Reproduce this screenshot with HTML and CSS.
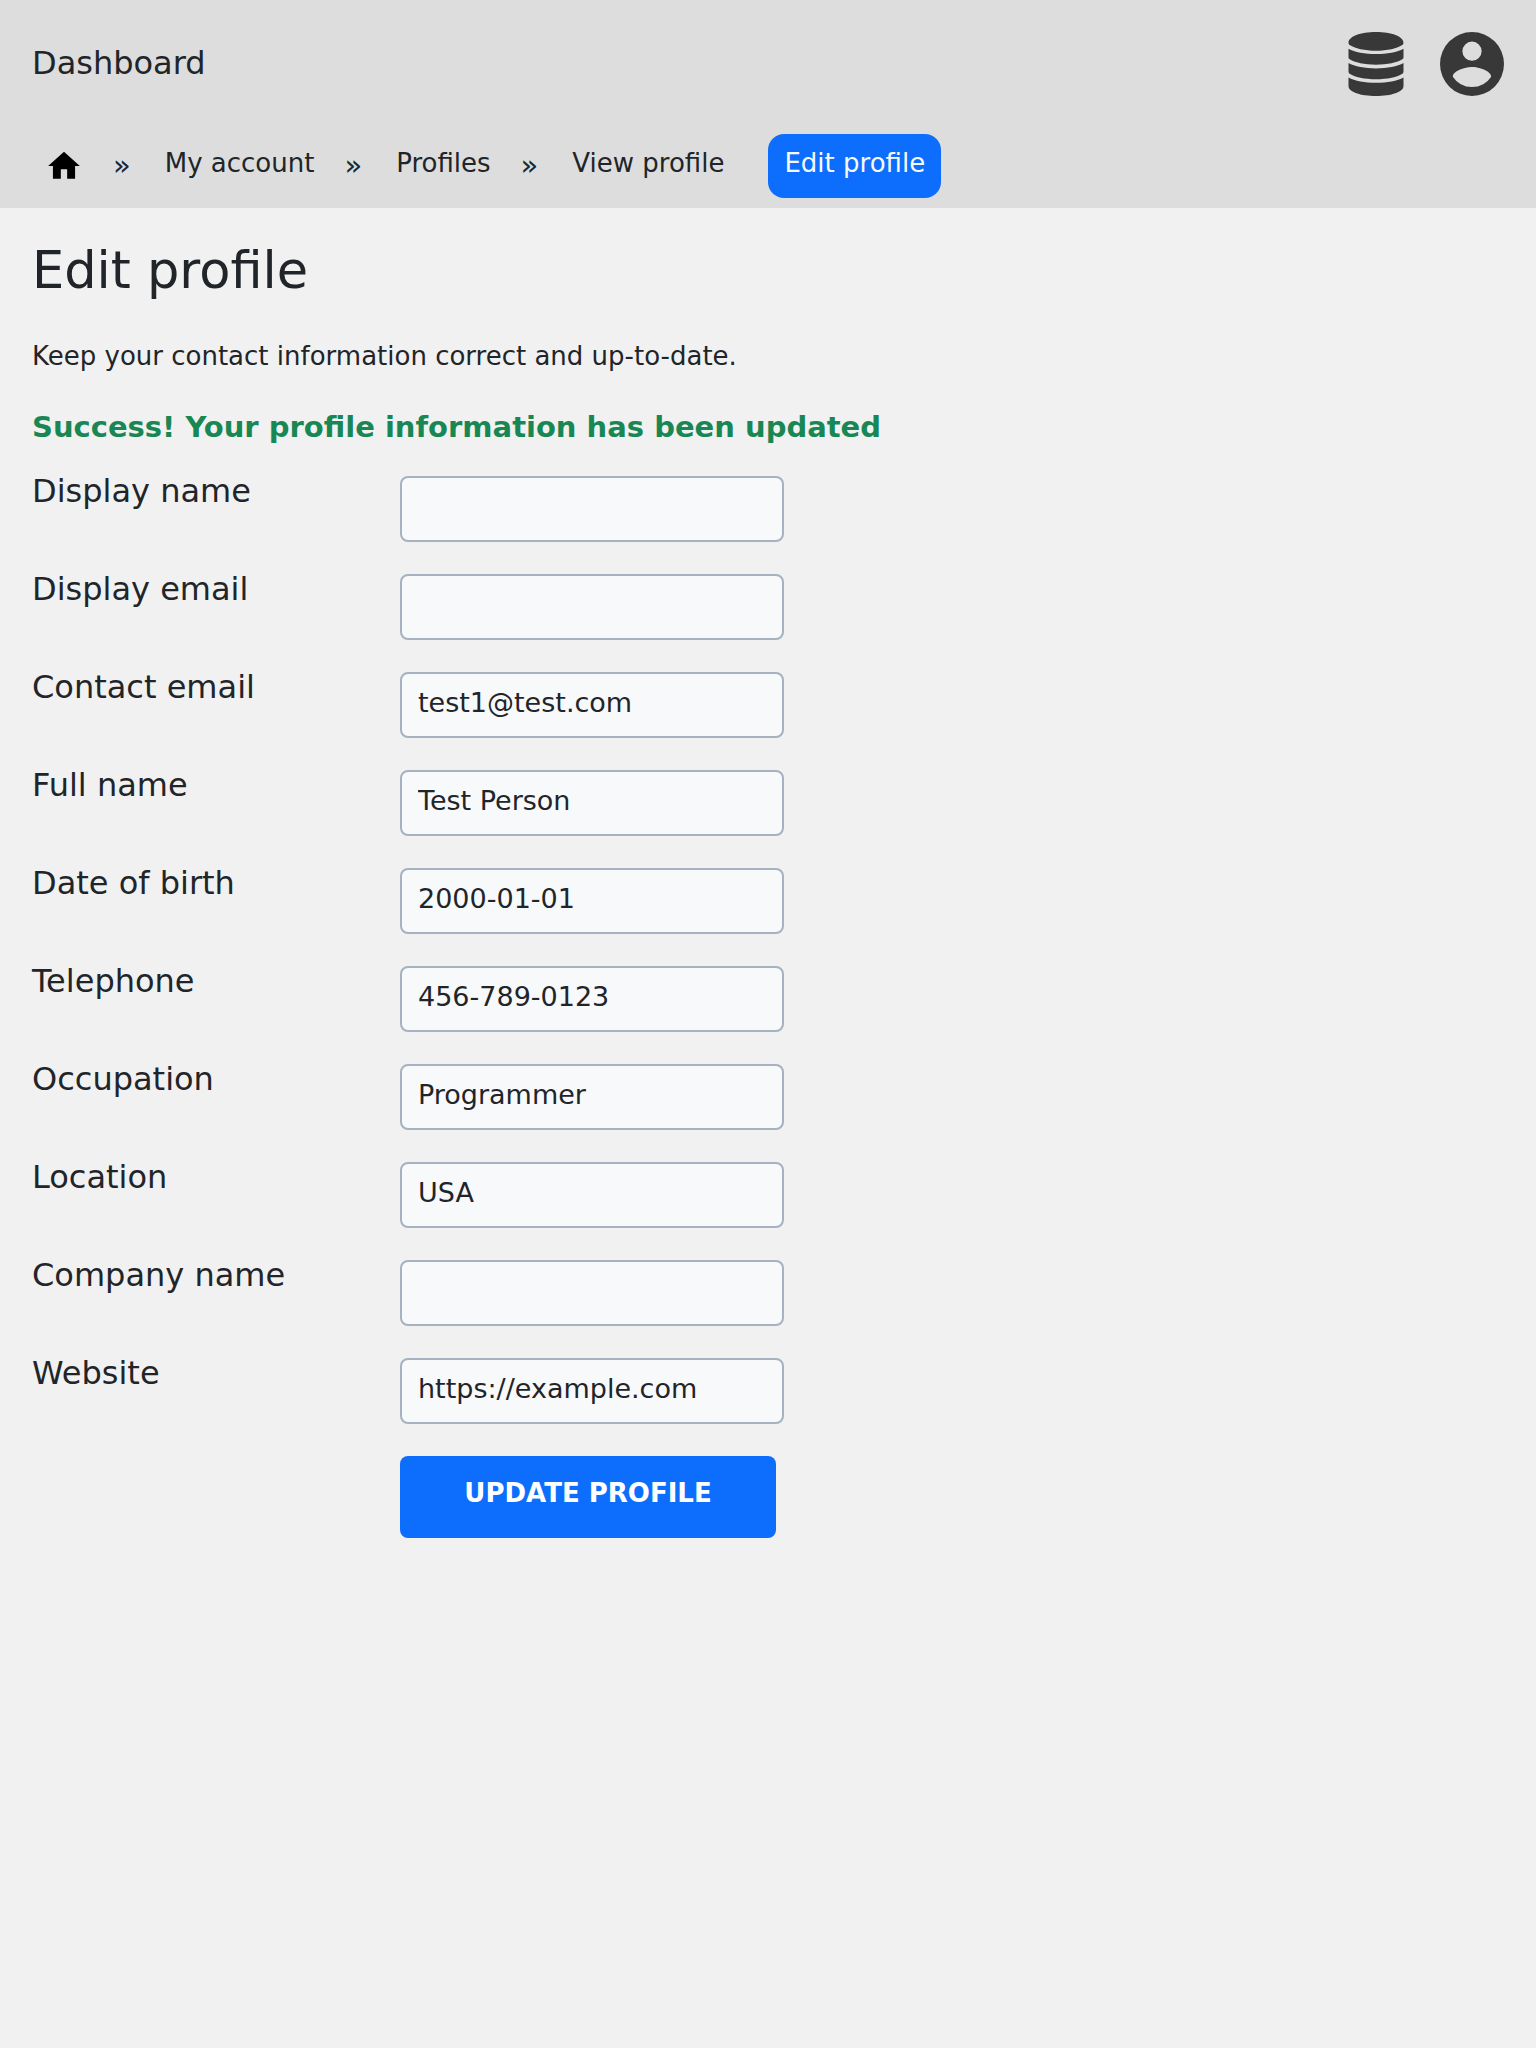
FILE: index.html
```html
<!DOCTYPE html>
<html lang="en">
<head>
<meta charset="utf-8">
<meta name="viewport" content="width=device-width, initial-scale=1">
<title>Edit profile</title>
<link rel="stylesheet" href="styles.css">
</head>
<body>
<header class="site-header">
  <div class="topbar">
    <a class="brand" href="#">Dashboard</a>
    <div class="topbar-icons">
      <a class="icon-link" href="#" aria-label="Data">
        <svg class="icon-database" viewBox="0 0 448 512" aria-hidden="true"><path d="M4 88C4 34 100 0 224 0s220 34 220 88c0 4-2 10-6 13-44 31-124 48-214 48S54 132 10 101c-4-3-6-9-6-13zM4 133c48 28 132 43 220 43s172-15 220-43v68c0 6-2 12-6 15-42 29-124 45-214 45S52 245 10 216c-4-3-6-9-6-15zM4 248c48 28 132 43 220 43s172-15 220-43v68c0 6-2 12-6 15-42 29-124 46-214 46S52 360 10 331c-4-3-6-9-6-15zM4 363c48 28 132 42 220 42s172-14 220-42v69c0 48-96 80-220 80S4 480 4 432z"/></svg>
      </a>
      <a class="icon-link" href="#" aria-label="Account">
        <svg class="icon-account" viewBox="0 0 20 20" aria-hidden="true"><path fill-rule="evenodd" d="M10 0a10 10 0 1 0 0 20 10 10 0 0 0 0-20zm0 3a3 3 0 1 1 0 6 3 3 0 0 1 0-6zm0 14.200a7.200 7.200 0 0 1-6-3.220c.03-1.990 4-3.080 6-3.080s5.970 1.090 6 3.080a7.200 7.200 0 0 1-6 3.220z"/></svg>
      </a>
    </div>
  </div>
  <nav class="breadcrumb" aria-label="Breadcrumb">
    <a class="home" href="#" aria-label="Home"><svg class="icon-home" viewBox="0 0 24 24" aria-hidden="true"><path d="M10 20v-6h4v6h5v-8h3L12 3 2 12h3v8z"/></svg></a>
    <span class="separator">»</span>
    <a class="crumb" href="#">My account</a>
    <span class="separator">»</span>
    <a class="crumb" href="#">Profiles</a>
    <span class="separator">»</span>
    <a class="crumb" href="#">View profile</a>
    <a class="crumb current" href="#" aria-current="page">Edit profile</a>
  </nav>
</header>
<main class="content">
  <h1 class="title">Edit profile</h1>
  <p class="intro">Keep your contact information correct and up-to-date.</p>
  <p class="success" role="status">Success! Your profile information has been updated</p>
  <form class="profile-form">
    <label class="label" for="display-name">Display name</label>
    <input class="field" id="display-name" type="text">
    <label class="label" for="display-email">Display email</label>
    <input class="field" id="display-email" type="text">
    <label class="label" for="contact-email">Contact email</label>
    <input class="field" id="contact-email" type="text" value="test1@test.com">
    <label class="label" for="full-name">Full name</label>
    <input class="field" id="full-name" type="text" value="Test Person">
    <label class="label" for="birth-date">Date of birth</label>
    <input class="field" id="birth-date" type="text" value="2000-01-01">
    <label class="label" for="telephone">Telephone</label>
    <input class="field" id="telephone" type="text" value="456-789-0123">
    <label class="label" for="occupation">Occupation</label>
    <input class="field" id="occupation" type="text" value="Programmer">
    <label class="label" for="location">Location</label>
    <input class="field" id="location" type="text" value="USA">
    <label class="label" for="company">Company name</label>
    <input class="field" id="company" type="text">
    <label class="label" for="website">Website</label>
    <input class="field" id="website" type="text" value="https://example.com">
    <button class="submit" type="submit">UPDATE PROFILE</button>
  </form>
</main>
</body>
</html>
```
FILE: styles.css
```css
* {
  box-sizing: border-box;
}

body {
  margin: 0;
  background: #f1f1f1;
  color: #212529;
  font-family: "DejaVu Sans", sans-serif;
  font-size: 26px;
  line-height: 40px;
}

a {
  color: inherit;
  text-decoration: none;
}

svg {
  display: block;
}

.site-header {
  background: #ddd;
  padding: 32px 32px 10px;
}

.topbar {
  display: flex;
  justify-content: space-between;
}

.brand {
  font-size: 32px;
  line-height: 62px;
}

.topbar-icons {
  display: flex;
  gap: 36px;
  fill: #383838;
}

.icon-database {
  width: 56px;
  height: 64px;
}

.icon-account {
  width: 64px;
  height: 64px;
}

.breadcrumb {
  display: flex;
  flex-wrap: wrap;
  align-items: center;
  margin-top: 38px;
  padding-left: 13px;
}

.icon-home {
  width: 38px;
  height: 38px;
}

.separator {
  padding: 0 34px 2px 30px;
  font-size: 29px;
}

.crumb {
  padding: 9px 0 15px;
}

.current {
  margin-left: 44px;
  padding: 9px 16px 15px;
  border-radius: 16px;
  background: #0d6efd;
  color: #f8f9fa;
}

.content {
  padding: 32px;
}

.title {
  margin: 0;
  font-size: 51px;
  font-weight: 400;
  line-height: 62px;
}

.intro {
  margin: 34px 0 32px;
}

.success {
  margin: 0 0 30px;
  color: #198754;
  font-size: 29px;
  font-weight: 700;
  line-height: 38px;
}

.profile-form {
  display: grid;
  grid-template-columns: 352px minmax(0, 384px);
  gap: 32px 16px;
}

.label {
  font-size: 32px;
  line-height: 30px;
}

.field {
  width: 100%;
  height: 66px;
  padding: 4px 16px 10px;
  border: 2px solid #a6b2c0;
  border-radius: 8px;
  background: #f8f9fb;
  color: inherit;
  font: inherit;
  font-size: 27px;
}

.submit {
  grid-column: 2;
  width: 376px;
  max-width: 100%;
  height: 82px;
  padding: 0 16px 8px;
  border: 0;
  border-radius: 8px;
  background: #0d6efd;
  color: #fff;
  font: inherit;
  font-weight: 700;
}

@media (max-width: 800px) {
  .profile-form {
    grid-template-columns: minmax(0, 384px);
  }

  .submit {
    grid-column: 1;
  }
}
```
